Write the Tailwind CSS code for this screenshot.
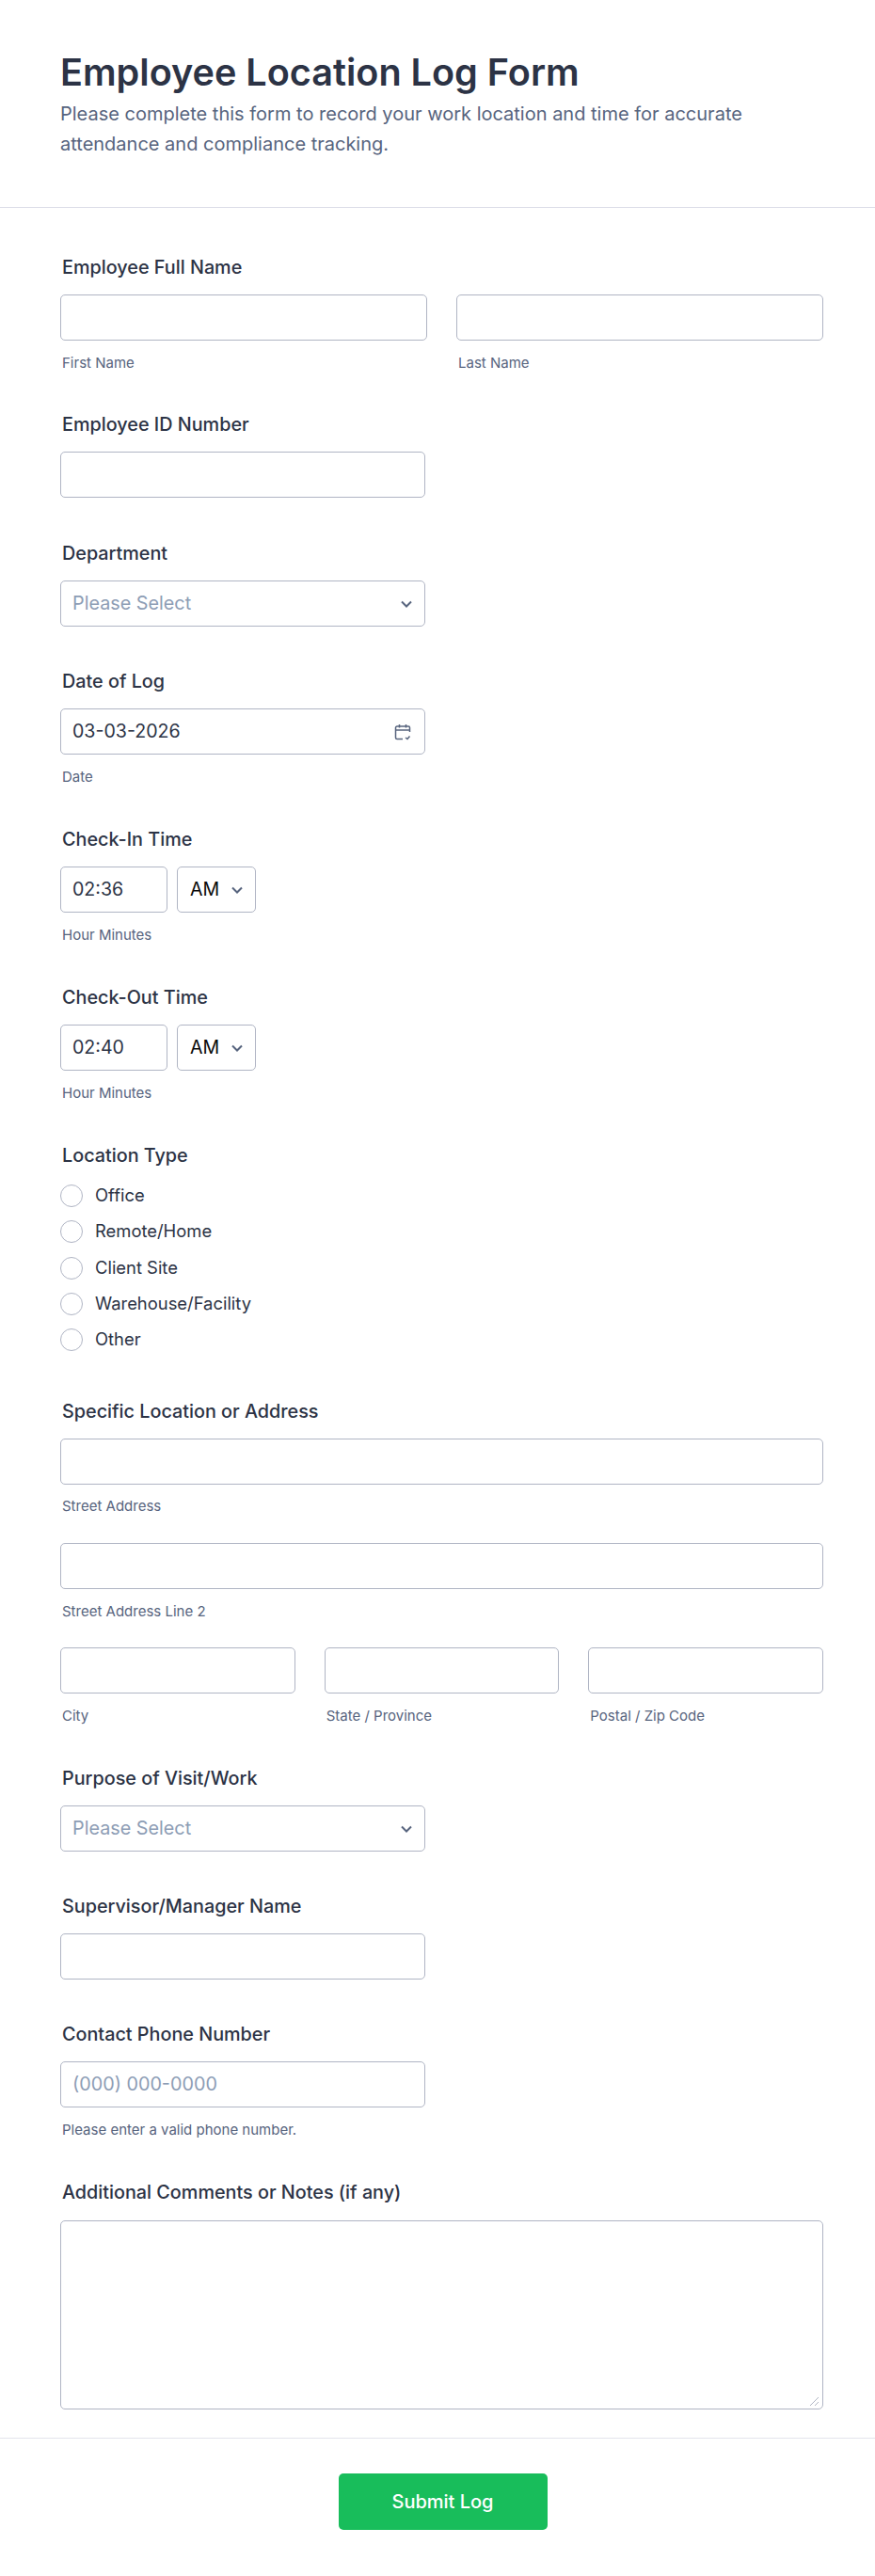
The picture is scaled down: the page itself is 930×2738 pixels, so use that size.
<!DOCTYPE html>
<html><head><meta charset="utf-8"><script src="https://cdn.jsdelivr.net/npm/@tailwindcss/browser@4"></script></head>
<body class="bg-white [font-family:Inter,sans-serif]">
<div class="w-[930px] h-[2738px] overflow-hidden">
<header class="h-[221px] border-b border-[#dcdde8] px-[64px] pt-[53px]">
<h1 class="text-[39.6px] leading-[48px] font-semibold text-[#2c3345]">Employee Location Log Form</h1>
<p class="text-[20px] leading-[32px] text-[#57647e] mt-[4px] w-[760px]">Please complete this form to record your work location and time for accurate attendance and compliance tracking.</p>
</header>
<main class="pl-[64px] pr-[55px]">
<div class="pt-[51px]">
<div class="ml-[2px] text-[19.8px] leading-[24px] font-medium text-[#2c3345]">Employee Full Name</div>
<div class="flex gap-[31px] mt-[17px]">
<div class="flex-1"><div class="h-[49px] border border-[#b0b5c4] rounded-[5px]"></div><div class="ml-[2px] mt-[15px] text-[15px] leading-[18px] text-[#57647e]">First Name</div></div>
<div class="flex-1"><div class="h-[49px] border border-[#b0b5c4] rounded-[5px]"></div><div class="ml-[2px] mt-[15px] text-[15px] leading-[18px] text-[#57647e]">Last Name</div></div>
</div>
</div>
<div class="mt-[44px]">
<div class="ml-[2px] text-[19.8px] leading-[24px] font-medium text-[#2c3345]">Employee ID Number</div>
<div class="mt-[17px] w-[388px] h-[49px] border border-[#b0b5c4] rounded-[5px]"></div>
</div>
<div class="mt-[47px]">
<div class="ml-[2px] text-[19.8px] leading-[24px] font-medium text-[#2c3345]">Department</div>
<div class="mt-[17px] w-[388px] h-[49px] border border-[#b0b5c4] rounded-[5px] flex items-center justify-between pl-[12px] pr-[13px]">
<span class="text-[19.8px] text-[#8d9db5]">Please Select</span>
<svg class="w-[12px] h-[8px]" viewBox="0 0 12 8" fill="none" stroke="#57647e" stroke-width="2"><path d="M1 1.5l5 5 5-5"/></svg>
</div>
</div>
<div class="mt-[46px]">
<div class="ml-[2px] text-[19.8px] leading-[24px] font-medium text-[#2c3345]">Date of Log</div>
<div class="mt-[17px] w-[388px] h-[49px] border border-[#b0b5c4] rounded-[5px] flex items-center justify-between pl-[12px] pr-[14px]">
<span class="text-[19.6px] text-[#2c3345]">03-03-2026</span>
<svg class="w-[18px] h-[18px]" viewBox="0 0 18 18" fill="none" stroke="#57647e" stroke-width="1.5"><path d="M16.5 9V4.5a1.5 1.5 0 0 0-1.5-1.5H3a1.5 1.5 0 0 0-1.5 1.5V15A1.5 1.5 0 0 0 3 16.5h6M1.5 7h15M5.5 1v3.5M12.5 1v3.5M12 15l2 1.5 2.5-3"/></svg>
</div>
<div class="ml-[2px] mt-[15px] text-[15px] leading-[18px] text-[#57647e]">Date</div>
</div>
<div class="mt-[45px]">
<div class="ml-[2px] text-[19.8px] leading-[24px] font-medium text-[#2c3345]">Check-In Time</div>
<div class="mt-[17px] flex gap-[10px]">
<div class="w-[114px] h-[49px] border border-[#b0b5c4] rounded-[5px] flex items-center pl-[12px] text-[19.6px] text-[#2c3345]">02:36</div>
<div class="w-[84px] h-[49px] border border-[#b0b5c4] rounded-[5px] flex items-center justify-between pl-[13px] pr-[13px] text-[19.6px] text-[#0a0a0a]">AM<svg class="w-[12px] h-[8px]" viewBox="0 0 12 8" fill="none" stroke="#57647e" stroke-width="2"><path d="M1 1.5l5 5 5-5"/></svg></div>
</div>
<div class="ml-[2px] mt-[15px] text-[15px] leading-[18px] text-[#57647e]">Hour Minutes</div>
</div>
<div class="mt-[45px]">
<div class="ml-[2px] text-[19.8px] leading-[24px] font-medium text-[#2c3345]">Check-Out Time</div>
<div class="mt-[17px] flex gap-[10px]">
<div class="w-[114px] h-[49px] border border-[#b0b5c4] rounded-[5px] flex items-center pl-[12px] text-[19.6px] text-[#2c3345]">02:40</div>
<div class="w-[84px] h-[49px] border border-[#b0b5c4] rounded-[5px] flex items-center justify-between pl-[13px] pr-[13px] text-[19.6px] text-[#0a0a0a]">AM<svg class="w-[12px] h-[8px]" viewBox="0 0 12 8" fill="none" stroke="#57647e" stroke-width="2"><path d="M1 1.5l5 5 5-5"/></svg></div>
</div>
<div class="ml-[2px] mt-[15px] text-[15px] leading-[18px] text-[#57647e]">Hour Minutes</div>
</div>
<div class="mt-[45px]">
<div class="ml-[2px] text-[19.8px] leading-[24px] font-medium text-[#2c3345]">Location Type</div>
<div class="mt-[19px] flex flex-col gap-[14.25px]">
<div class="flex items-center gap-[13px] h-[24px] text-[18.4px] text-[#2c3345]"><span class="w-[24px] h-[24px] rounded-full border border-[#b0b5c4]"></span>Office</div>
<div class="flex items-center gap-[13px] h-[24px] text-[18.4px] text-[#2c3345]"><span class="w-[24px] h-[24px] rounded-full border border-[#b0b5c4]"></span>Remote/Home</div>
<div class="flex items-center gap-[13px] h-[24px] text-[18.4px] text-[#2c3345]"><span class="w-[24px] h-[24px] rounded-full border border-[#b0b5c4]"></span>Client Site</div>
<div class="flex items-center gap-[13px] h-[24px] text-[18.4px] text-[#2c3345]"><span class="w-[24px] h-[24px] rounded-full border border-[#b0b5c4]"></span>Warehouse/Facility</div>
<div class="flex items-center gap-[13px] h-[24px] text-[18.4px] text-[#2c3345]"><span class="w-[24px] h-[24px] rounded-full border border-[#b0b5c4]"></span>Other</div>
</div>
</div>
<div class="mt-[52px]">
<div class="ml-[2px] text-[19.8px] leading-[24px] font-medium text-[#2c3345]">Specific Location or Address</div>
<div class="mt-[17px] h-[49px] border border-[#b0b5c4] rounded-[5px]"></div>
<div class="ml-[2px] mt-[14px] text-[15px] leading-[18px] text-[#57647e]">Street Address</div>
<div class="mt-[30px] h-[49px] border border-[#b0b5c4] rounded-[5px]"></div>
<div class="ml-[2px] mt-[15px] text-[15px] leading-[18px] text-[#57647e]">Street Address Line 2</div>
<div class="mt-[29px] flex gap-[31px]">
<div class="flex-1"><div class="h-[49px] border border-[#b0b5c4] rounded-[5px]"></div><div class="ml-[2px] mt-[15px] text-[15px] leading-[18px] text-[#57647e]">City</div></div>
<div class="flex-1"><div class="h-[49px] border border-[#b0b5c4] rounded-[5px]"></div><div class="ml-[2px] mt-[15px] text-[15px] leading-[18px] text-[#57647e]">State / Province</div></div>
<div class="flex-1"><div class="h-[49px] border border-[#b0b5c4] rounded-[5px]"></div><div class="ml-[2px] mt-[15px] text-[15px] leading-[18px] text-[#57647e]">Postal / Zip Code</div></div>
</div>
</div>
<div class="mt-[45px]">
<div class="ml-[2px] text-[19.8px] leading-[24px] font-medium text-[#2c3345]">Purpose of Visit/Work</div>
<div class="mt-[17px] w-[388px] h-[49px] border border-[#b0b5c4] rounded-[5px] flex items-center justify-between pl-[12px] pr-[13px]">
<span class="text-[19.8px] text-[#8d9db5]">Please Select</span>
<svg class="w-[12px] h-[8px]" viewBox="0 0 12 8" fill="none" stroke="#57647e" stroke-width="2"><path d="M1 1.5l5 5 5-5"/></svg>
</div>
</div>
<div class="mt-[46px]">
<div class="ml-[2px] text-[19.8px] leading-[24px] font-medium text-[#2c3345]">Supervisor/Manager Name</div>
<div class="mt-[17px] w-[388px] h-[49px] border border-[#b0b5c4] rounded-[5px]"></div>
</div>
<div class="mt-[46px]">
<div class="ml-[2px] text-[19.8px] leading-[24px] font-medium text-[#2c3345]">Contact Phone Number</div>
<div class="mt-[17px] w-[388px] h-[49px] border border-[#b0b5c4] rounded-[5px] flex items-center pl-[12px] text-[19.8px] text-[#8d9db5]">(000) 000-0000</div>
<div class="ml-[2px] mt-[15px] text-[15px] leading-[18px] text-[#57647e]">Please enter a valid phone number.</div>
</div>
<div class="mt-[45px]">
<div class="ml-[2px] text-[19.8px] leading-[24px] font-medium text-[#2c3345]">Additional Comments or Notes (if any)</div>
<div class="relative mt-[18px] h-[201px] border border-[#b0b5c4] rounded-[5px]">
<svg class="absolute right-[4px] bottom-[3px] w-[9px] h-[9px]" viewBox="0 0 9 9" stroke="#b0b5c4" stroke-width="1"><path d="M0 9L9 0M5 9l4-4"/></svg>
</div>
</div>
</main>
<footer class="mt-[30px] border-t border-[#e3e5ec] flex justify-center pt-[37px] pl-[11px]">
<button class="w-[222px] h-[60px] bg-[#18bd5b] rounded-[5px] text-white text-[20px] font-medium">Submit Log</button>
</footer>
</div>
</body></html>
